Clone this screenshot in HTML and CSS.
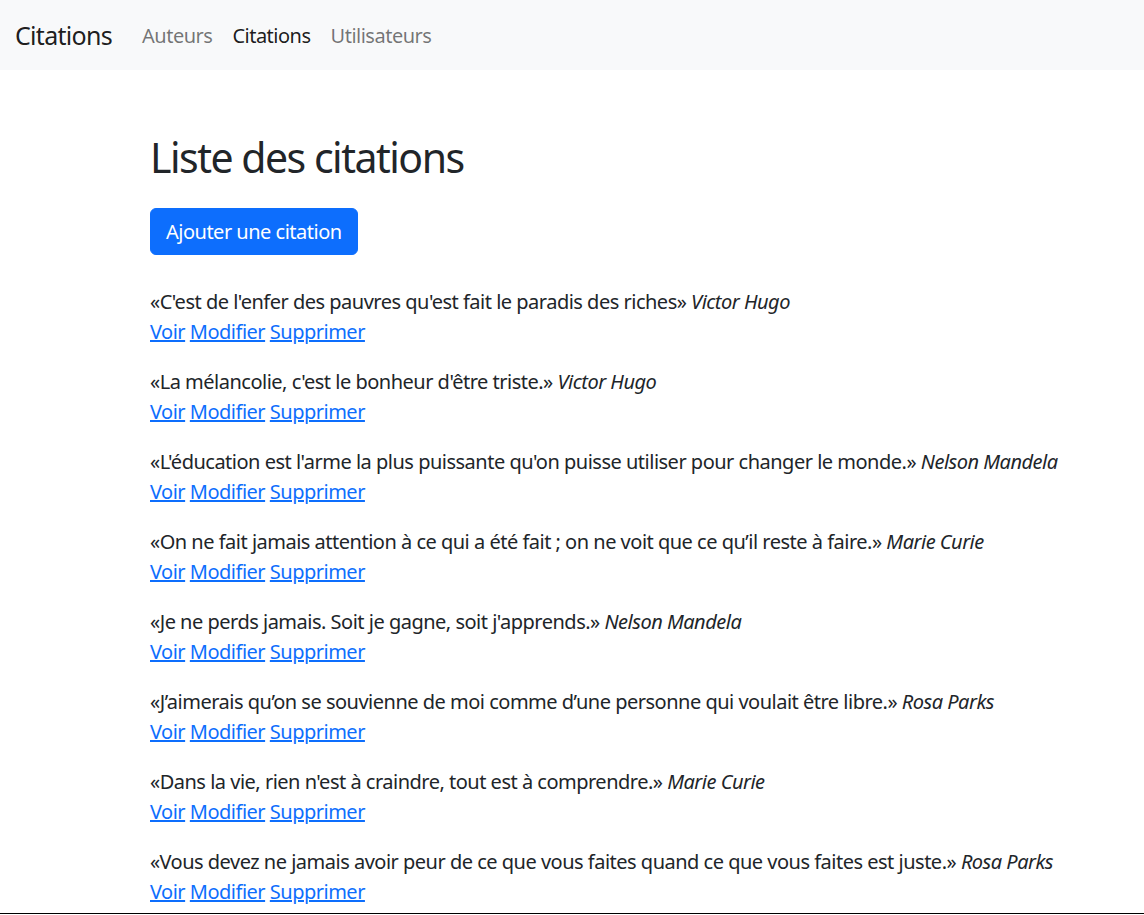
FILE: index.html
```html
<!DOCTYPE html>
<html lang="fr">
<head>
    <meta charset="UTF-8">
    <meta name="viewport" content="width=device-width, initial-scale=1.0">
    <title>Citations</title>
    <link rel="stylesheet" href="styles.css">
</head>
<body>
    <nav class="navbar">
        <a class="brand" href="#">Citations</a>
        <div class="nav">
            <a class="nav-link" href="#">Auteurs</a>
            <a class="nav-link active" href="#">Citations</a>
            <a class="nav-link" href="#">Utilisateurs</a>
        </div>
    </nav>

    <main class="container">
        <h1>Liste des citations</h1>
        <p><a class="btn" href="#">Ajouter une citation</a></p>

        <div class="quote">
            «C'est de l'enfer des pauvres qu'est fait le paradis des riches» <em>Victor Hugo</em><br>
            <a href="#">Voir</a> <a href="#">Modifier</a> <a href="#">Supprimer</a>
        </div>
        <div class="quote">
            «La mélancolie, c'est le bonheur d'être triste.» <em>Victor Hugo</em><br>
            <a href="#">Voir</a> <a href="#">Modifier</a> <a href="#">Supprimer</a>
        </div>
        <div class="quote">
            «L'éducation est l'arme la plus puissante qu'on puisse utiliser pour changer le monde.» <em>Nelson Mandela</em><br>
            <a href="#">Voir</a> <a href="#">Modifier</a> <a href="#">Supprimer</a>
        </div>
        <div class="quote">
            «On ne fait jamais attention à ce qui a été fait ; on ne voit que ce qu’il reste à faire.» <em>Marie Curie</em><br>
            <a href="#">Voir</a> <a href="#">Modifier</a> <a href="#">Supprimer</a>
        </div>
        <div class="quote">
            «Je ne perds jamais. Soit je gagne, soit j'apprends.» <em>Nelson Mandela</em><br>
            <a href="#">Voir</a> <a href="#">Modifier</a> <a href="#">Supprimer</a>
        </div>
        <div class="quote">
            «J’aimerais qu’on se souvienne de moi comme d’une personne qui voulait être libre.» <em>Rosa Parks</em><br>
            <a href="#">Voir</a> <a href="#">Modifier</a> <a href="#">Supprimer</a>
        </div>
        <div class="quote">
            «Dans la vie, rien n'est à craindre, tout est à comprendre.» <em>Marie Curie</em><br>
            <a href="#">Voir</a> <a href="#">Modifier</a> <a href="#">Supprimer</a>
        </div>
        <div class="quote">
            «Vous devez ne jamais avoir peur de ce que vous faites quand ce que vous faites est juste.» <em>Rosa Parks</em><br>
            <a href="#">Voir</a> <a href="#">Modifier</a> <a href="#">Supprimer</a>
        </div>
    </main>
    <div class="edge"></div>
</body>
</html>
```

FILE: styles.css
```css
html {
    font-size: 20px;
}

body {
    margin: 0;
    font-family: "Noto Sans", "Open Sans", sans-serif;
    font-size: 1rem;
    line-height: 1.5;
    letter-spacing: -0.5px;
    color: #212529;
    background-color: #fff;
}

a {
    color: #0d6efd;
}

.navbar {
    display: flex;
    align-items: center;
    padding: 11px 15px 9px;
    background-color: #f8f9fa;
}

.brand {
    font-size: 1.25rem;
    padding: 6.25px 0;
    margin-right: 20px;
    letter-spacing: -0.7px;
    color: rgba(0, 0, 0, 0.9);
    text-decoration: none;
}

.nav {
    display: flex;
}

.nav-link {
    padding: 10px;
    color: rgba(0, 0, 0, 0.55);
    text-decoration: none;
}

.nav-link.active {
    color: rgba(0, 0, 0, 0.9);
}

.container {
    padding: 0 0 0 150px;
    margin-top: 63px;
}

h1 {
    font-size: 2.05rem;
    font-weight: 400;
    line-height: 1.2;
    letter-spacing: -1.5px;
    margin: 0 0 26px;
}

p {
    margin: 0 0 32px;
}

.btn {
    display: inline-block;
    padding: 8px 15px 7px;
    border: 1px solid #0d6efd;
    border-radius: 6px;
    background-color: #0d6efd;
    color: #fff;
    text-decoration: none;
}

.quote {
    margin-bottom: 20px;
}

.edge {
    position: fixed;
    left: 0;
    right: 0;
    bottom: 1px;
    height: 1px;
    background: #000;
}
```
